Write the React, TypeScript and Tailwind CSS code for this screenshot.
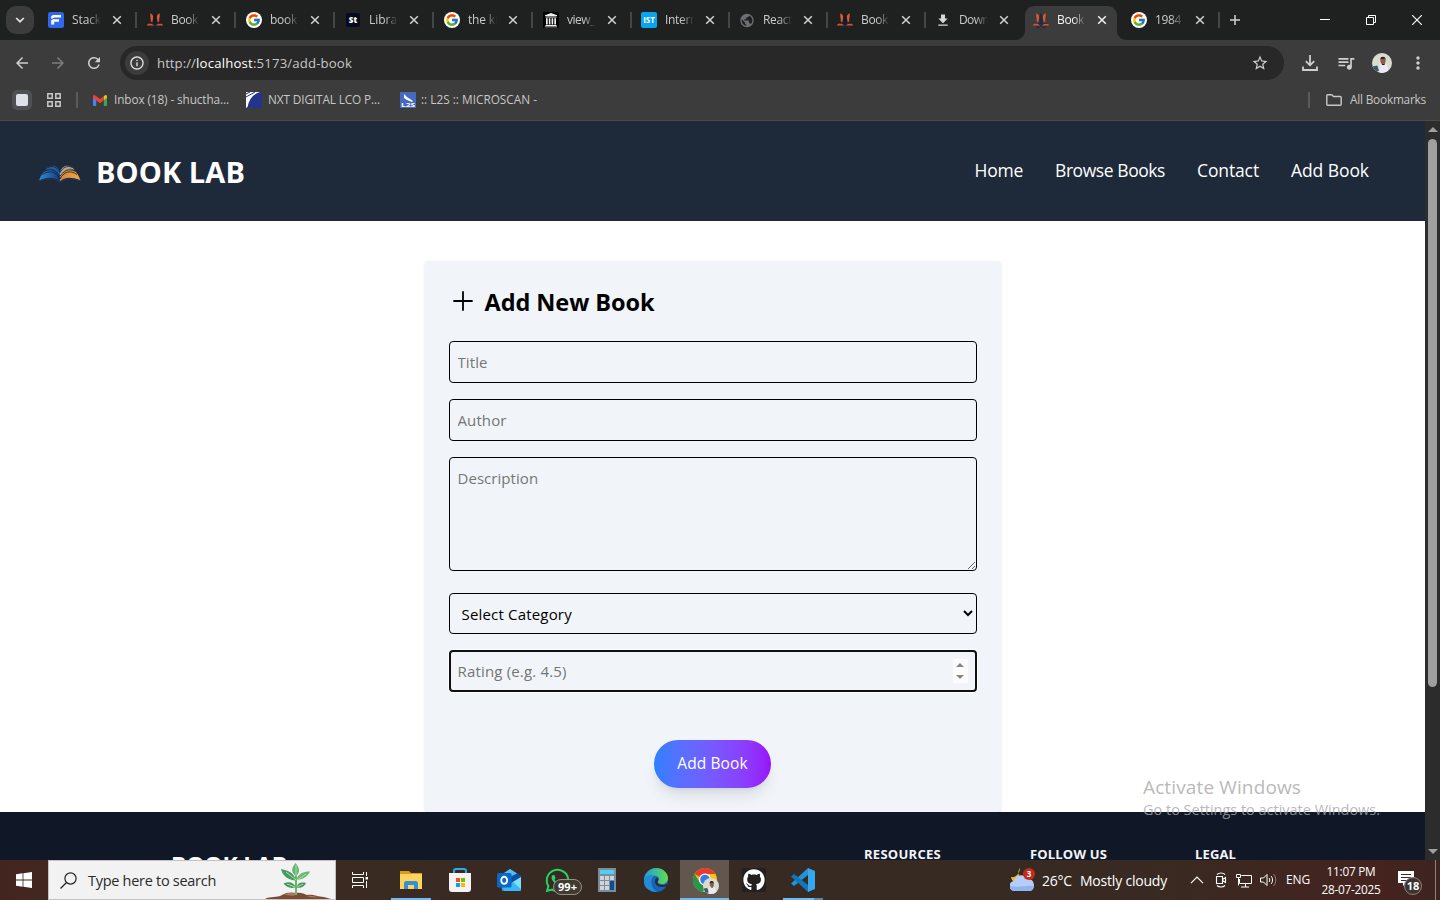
import { useLayoutEffect, useRef, type ReactNode } from "react";
import { FcGoogle } from "react-icons/fc";
import { FaGithub, FaWhatsapp } from "react-icons/fa";
import { MdArrowBack, MdArrowForward, MdRefresh, MdPublic, MdQueueMusic, MdStarBorder, MdMoreVert, MdInfoOutline, MdDownload } from "react-icons/md";

/** Single line of text whose letter spacing is tuned to fill a given width. */
function Fit({ w, className = "", children }: { w: number; className?: string; children: string }) {
  const ref = useRef<HTMLSpanElement>(null);
  useLayoutEffect(() => {
    const el = ref.current;
    if (!el) return;
    el.style.letterSpacing = "0px";
    const natural = el.getBoundingClientRect().width;
    el.style.letterSpacing = `${(w - natural) / children.length}px`;
  }, [w, children]);
  return (
    <span ref={ref} className={`inline-block shrink-0 whitespace-nowrap ${className}`}>
      {children}
    </span>
  );
}

function BookFavicon({ active = false }: { active?: boolean }) {
  return (
    <svg viewBox="0 0 16 16" className="size-4">
      <path d="M6.300 5 8 .5 9.700 5v7H6.300z" fill={active ? "#1d2b45" : "#141b27"} />
      <path d="M3.500 1.200C5.800 2.300 6.600 4.200 6 6.500l-.7 4L3.600 9C4.400 6.800 2.600 4.800 3.500 1.200zM12.500 1.200C10.200 2.300 9.400 4.200 10 6.500l.7 4L12.400 9c-.8-2.200 1-4.200.1-7.800z" fill="#e2572f" />
      <path d="M0 13.800c.3-2 1.700-2.700 3.400-2.300 1.500.4 2.700.8 3.800 2.200-2.300-.4-4.700-.4-7.200.1zM16 13.800c-.3-2-1.700-2.700-3.400-2.300-1.500.4-2.700.8-3.800 2.200 2.300-.4 4.700-.4 7.200.1z" fill="#dc522c" />
      <path d="M1 11h5l2 2 2-2h5l-1 .7H10.500L8 14.700 5.500 11.700z" fill="#1c2a44" />
      <path d="M3 15.200h4M9 15.200h4" stroke="#1c2a44" strokeWidth="1" />
    </svg>
  );
}

function GoogleFavicon() {
  return (
    <span className="flex size-4 items-center justify-center rounded-full bg-white">
      <FcGoogle className="size-[14px]" />
    </span>
  );
}

function StackFavicon() {
  return (
    <svg viewBox="0 0 16 16" className="size-4">
      <rect width="16" height="16" rx="2.500" fill="#2f68ee" />
      <path d="M3.200 4.200 5 3h8v2.500H6.500L3.200 7zM3.200 8.500 5 7.300h6v2.500H6.200v2.700h-3z" fill="#fff" />
    </svg>
  );
}

function ArchiveFavicon() {
  return (
    <svg viewBox="0 0 16 16" className="size-4">
      <path d="M0 0h16v16H0z" fill="#000" />
      <path d="M8 1l6 2.200v.8H2v-.8zM2.500 4.600h11v1h-11zM3 6.200h1.700v6.300H3zm2.800 0h1.600v6.300H5.800zm2.800 0h1.600v6.300H8.600zm2.700 0H13v6.300h-1.700zM2.500 13h11v1h-11zM1.800 14.400h12.400v.8H1.800z" fill="#eee" />
    </svg>
  );
}

function CloseGlyph({ active = false }: { active?: boolean }) {
  return (
    <svg viewBox="0 0 10 10" className="size-[10px]">
      <path d="M1.200 1.200l7.600 7.600M8.800 1.200 1.200 8.800" stroke={active ? "#f2f2f2" : "#d0d2d1"} strokeWidth="1.500" />
    </svg>
  );
}

const tabs: { label: string; w: number; icon: ReactNode; active?: boolean }[] = [
  { label: "Stack", w: 29, icon: <StackFavicon /> },
  { label: "Book", w: 27, icon: <BookFavicon /> },
  { label: "book", w: 27, icon: <GoogleFavicon /> },
  { label: "Librar", w: 33, icon: <span className="flex size-[14px] items-center justify-center rounded-xs bg-[#050c1d] text-[8px] font-extrabold text-white">St</span> },
  { label: "the kin", w: 37, icon: <GoogleFavicon /> },
  { label: "view_", w: 28, icon: <ArchiveFavicon /> },
  { label: "Intern", w: 32, icon: <span className="flex size-4 items-center justify-center rounded-xs bg-[#08a5ee] text-[8px] font-bold text-white">IST</span> },
  { label: "React", w: 29, icon: <MdPublic className="size-[17px] text-[#6c6f73]" /> },
  { label: "Book", w: 27, icon: <BookFavicon /> },
  { label: "Down", w: 30, icon: <MdDownload className="size-[17px] text-[#d8d8d8]" /> },
  { label: "Book", w: 27, icon: <BookFavicon active />, active: true },
  { label: "1984", w: 26, icon: <GoogleFavicon /> },
];

function TabStrip() {
  return (
    <div className="flex h-10 items-center bg-[#1f2120] text-[12px] text-[#c9cbca]">
      <div className="ml-[6px] flex h-7 w-7 shrink-0 items-center justify-center rounded-[10px] bg-[#3c3c3c]">
        <svg viewBox="0 0 10 6" className="h-[6px] w-[10px]"><path d="M1.200 1 5 4.700 8.800 1" fill="none" stroke="#e3e3e3" strokeWidth="1.700" /></svg>
      </div>
      <div className="ml-[4px] flex h-full">
        {tabs.map((t, i) => (
          <div key={i} className={`relative flex h-full shrink-0 items-center ${i < 5 ? "w-[99px]" : "w-[98px]"}`}>
            {t.active && (
              <svg viewBox="0 0 112 34" className="absolute top-[6px] left-[-8px] h-[34px] w-[112px]">
                <path d="M0 34c6 0 10-4 10-10V10C10 4 14 0 20 0h72c6 0 10 4 10 10v14c0 6 4 10 10 10z" fill="#3c3c3c" />
              </svg>
            )}
            <div className="relative ml-[10px] flex w-4 shrink-0 justify-center">{t.icon}</div>
            <div className={`relative ml-[8px] w-[29px] shrink-0 overflow-hidden [mask-image:linear-gradient(90deg,#000_55%,transparent)] ${t.active ? "text-[#f5f5f5]" : ""}`}>
              <Fit w={t.w}>{t.label}</Fit>
            </div>
            <div className="relative ml-[11px] flex w-[10px] shrink-0"><CloseGlyph active={t.active} /></div>
            {i !== 9 && i !== 10 && <div className="ml-[13px] h-4 w-[1.500px] shrink-0 bg-[#454746]" />}
          </div>
        ))}
      </div>
      <svg viewBox="0 0 12 12" className="ml-[10px] size-[12px]"><path d="M6 1v10M1 6h10" stroke="#d2d2d2" strokeWidth="1.500" /></svg>
      <div className="ml-auto flex items-center">
        <svg viewBox="0 0 10 10" className="mr-[36px] size-[10px]"><path d="M0 4.500h10" stroke="#fff" /></svg>
        <svg viewBox="0 0 10 10" className="mr-[36px] size-[10px]"><path d="M.5 2.500h7v7h-7zM2.500 2.500v-2h7v7h-2" fill="none" stroke="#fff" /></svg>
        <svg viewBox="0 0 10 10" className="mr-[18px] size-[10px]"><path d="M0 0l10 10M10 0 0 10" stroke="#fff" strokeWidth="1.100" /></svg>
      </div>
    </div>
  );
}

function Avatar({ className }: { className: string }) {
  return (
    <svg viewBox="0 0 20 20" className={className}>
      <defs><clipPath id="face"><circle cx="10" cy="10" r="10" /></clipPath></defs>
      <g clipPath="url(#face)">
        <path d="M0 0h20v20H0z" fill="#d9dccf" />
        <path d="M0 13h6v7H0z" fill="#6f9db2" />
        <path d="M1 13.500l4-1 2 5-4 2z" fill="#3f5568" />
        <path d="M8 11c3-2 6-1 7 1l2 8H7z" fill="#eaeaf5" />
        <ellipse cx="11" cy="7.500" rx="2.600" ry="3.400" fill="#8c5c43" />
        <path d="M8.300 6.500C8.300 2.500 14 3 13.700 7l-.7-1.500c-2 .5-3 0-4.700 1zM9.500 10c1 1.500 2.500 1.500 3.800-.5l-.8 2.500h-2.500z" fill="#261e1d" />
      </g>
    </svg>
  );
}

function Toolbar() {
  return (
    <div className="flex h-[46px] shrink-0 items-center bg-[#3c3c3c] text-[#cfcfcf]">
      <MdArrowBack className="ml-[13px] size-[18px]" />
      <MdArrowForward className="ml-[18px] size-[18px] text-[#7d7d7d]" />
      <MdRefresh className="ml-[18px] size-[18px]" />
      <div className="ml-[17px] flex h-[34px] w-[1164px] items-center rounded-full bg-[#282828] pl-[5px]">
        <span className="flex size-6 items-center justify-center rounded-full bg-[#3c3c3c]"><MdInfoOutline className="size-[16px] text-[#e3e3e3]" /></span>
        <span className="mt-[2px] ml-[8px] flex text-[13.200px] text-[#c7c7c7]">
          <Fit w={39}>http://</Fit>
          <Fit w={57} className="text-white">localhost</Fit>
          <Fit w={99}>:5173/add-book</Fit>
        </span>
        <MdStarBorder className="mr-[15px] ml-auto size-[18px]" />
      </div>
      <svg viewBox="0 0 16 16" className="ml-[18px] size-4"><path d="M8 0v10M3.800 6.200 8 10.300l4.200-4.100M1 11.500v3.500h14v-3.500" fill="none" stroke="#cfcfcf" strokeWidth="1.800" /></svg>
      <MdQueueMusic className="ml-[18px] size-[20px]" />
      <Avatar className="ml-[16px] size-5" />
      <MdMoreVert className="ml-[16px] size-5" />
    </div>
  );
}

function Bookmarks() {
  return (
    <div className="flex h-[34px] shrink-0 items-center bg-[#3c3c3c] pb-[6px] text-[11.800px] text-[#c7c7c7]">
      <span className="ml-[12px] flex size-5 items-center justify-center rounded-[5px] bg-[#4e5054]"><span className="size-3 rounded-[2px] bg-[#dfe1e8]" /></span>
      <svg viewBox="0 0 14 14" className="ml-[15px] size-[14px]"><path d="M.8.8h4.400v4.400H.8zM8.800.8h4.400v4.400H8.800zM.8 8.800h4.400v4.400H.8zM8.800 8.800h4.400v4.400H8.800z" fill="none" stroke="#c9c9c9" strokeWidth="1.500" /></svg>
      <span className="ml-[15px] h-4 w-[2px] bg-[#5b5b5b]" />
      <svg viewBox="0 0 14 11" className="ml-[15px] h-[11px] w-[14px]">
        <path d="M0 1.500h3.200V11H1a1 1 0 0 1-1-1z" fill="#4285f4" />
        <path d="M10.800 1.500H14V10a1 1 0 0 1-1 1h-2.200z" fill="#34a853" />
        <path d="M10.800 1.200 12 .3c.8-.6 2 0 2 1.200v1.300l-3.200 2.500z" fill="#fbbc04" />
        <path d="M0 1.500C0 .3 1.200-.3 2 .3l5 3.800 3.800-2.900v4.100L7 8.200 0 2.900z" fill="#ea4335" />
      </svg>
      <Fit w={115} className="ml-[7px]">Inbox (18) - shuctha...</Fit>
      <svg viewBox="0 0 16 16" className="ml-[17px] size-4"><path d="M0 0h16v16H0z" fill="#22358b" /><path d="M0 0h14C7 2 3 7 1.500 15L0 16z" fill="#fff" /><path d="M0 5 9 0M0 2 4 0" stroke="#22358b" strokeWidth="1" /></svg>
      <Fit w={112} className="ml-[6px]">NXT DIGITAL LCO P...</Fit>
      <svg viewBox="0 0 16 16" className="ml-[20px] size-4"><path d="M0 0h16v16H0z" fill="#466abf" /><path d="M4 2l3 3 6 4-1 1-5-2-3-2z" fill="#fff" /><text x="1" y="15" fontSize="5" fontWeight="bold" fill="#fff" textLength="14" lengthAdjust="spacingAndGlyphs">L2S</text></svg>
      <Fit w={116} className="ml-[5px]">:: L2S :: MICROSCAN -</Fit>
      <span className="ml-auto h-4 w-[2px] bg-[#5b5b5b]" />
      <svg viewBox="0 0 16 12" className="ml-[16px] h-3 w-4"><path d="M.8 10.200V1.800c0-.6.4-1 1-1h4L7.500 2.500h6.700c.6 0 1 .4 1 1v6.700c0 .6-.4 1-1 1H1.800c-.6 0-1-.4-1-1z" fill="none" stroke="#c7c7c7" strokeWidth="1.400" /></svg>
      <Fit w={76} className="mr-[14px] ml-[8px]">All Bookmarks</Fit>
    </div>
  );
}

function BookLogo() {
  return (
    <svg viewBox="0 0 44 20" className="h-5 w-[44px]">
      <defs>
        <linearGradient id="lp"><stop offset="0" stopColor="#2e8bcb" /><stop offset=".65" stopColor="#1c58a9" /><stop offset="1" stopColor="#172f62" /></linearGradient>
        <linearGradient id="rp"><stop offset="0" stopColor="#d88239" /><stop offset="1" stopColor="#f5aa3b" /></linearGradient>
      </defs>
      <path d="M1 17.500C4 9 8 6 13 6c4 0 8 3 9 8v4.500C16.500 13.500 9 14 1 17.500z" fill="url(#lp)" />
      <path d="M42.500 17.500C39.500 9 36 6 31 6c-4 0-8 3-9 8v4.500C27 13.500 34 14 42.500 17.500z" fill="url(#rp)" />
      <path d="M7.500 7c3-5.500 11.500-6.500 14.500 2v5C19 6 14 4 7.500 7z" fill="#1b60ae" />
      <path d="M36.500 7c-3-5.500-11.500-6.500-14.500 2v5C26 6 31 4 36.500 7z" fill="#afa7a6" />
      <path d="M4.500 11.500c7-5 14-2.500 17.500 4.500M6.500 8.500c7-4 12 0 15.500 4.500M10 4.500c6-3 9.500 1 12 5M39 11.500c-7-5-13.500-2.500-17 4.500M37.500 8.500c-7-4-12 0-15.500 4.500M34.500 4.500c-6-3-10 1-12.500 5" fill="none" stroke="#1e2939" strokeWidth=".9" />
      <path d="M0 18.500c8-3.500 16.500-3.500 22 .8 5.500-4.300 13-4.300 21.500-1.300" fill="none" stroke="#193861" strokeWidth="1.200" />
    </svg>
  );
}

function SiteHeader() {
  return (
    <header className="flex h-[100px] shrink-0 items-center bg-gray-800 pr-[56px] pl-[38px] text-white">
      <div className="mt-1"><BookLogo /></div>
      <Fit w={149} className="mt-[2px] ml-[14px] text-[29px] leading-[40px] font-bold">BOOK LAB</Fit>
      <nav className="mb-[2px] ml-auto flex gap-8 text-[17.500px] leading-7">
        <Fit w={48.500}>Home</Fit>
        <Fit w={110}>Browse Books</Fit>
        <Fit w={62}>Contact</Fit>
        <Fit w={78}>Add Book</Fit>
      </nav>
    </header>
  );
}

const field = "block w-full rounded-sm border border-black bg-transparent p-2 text-[15px] leading-6 outline-none placeholder:text-[#757575]";

function AddBookForm() {
  return (
    <form className="mx-auto mt-10 h-[551px] w-full max-w-xl shrink-0 rounded-sm bg-slate-100 p-6 shadow-sm">
      <h2 className="flex h-8 items-center text-black">
        <svg viewBox="0 0 20 20" className="mb-[1px] ml-[4px] size-5"><path d="M10 1v18M1 10h18" stroke="#000" strokeWidth="1.800" strokeLinecap="round" /></svg>
        <Fit w={170} className="mt-[2px] ml-[12px] text-[23.500px] leading-8 font-bold">Add New Book</Fit>
      </h2>
      <input placeholder="Title" className={`${field} mt-6 h-[42px] tracking-[0.1px]`} />
      <input placeholder="Author" className={`${field} mt-4 h-[42px] tracking-[0.1px]`} />
      <textarea placeholder="Description" className={`${field} mt-4 h-[114px] resize-y tracking-[0.05px]`} />
      <select className={`${field} mt-[22px] h-[41px] tracking-[0.18px] text-black`}>
        <option>Select Category</option>
      </select>
      <div className="mt-4 flex h-[42px] items-center rounded-sm border-2 border-[#101010] pr-[7px] pl-[7px] ring-1 ring-white">
        <input placeholder="Rating (e.g. 4.5)" className="min-w-0 flex-1 bg-transparent text-[15px] leading-6 tracking-[0.17px] outline-none placeholder:text-[#757575]" />
        <div className="flex h-6 w-[15px] flex-col items-center justify-between bg-[#fcfcfc] py-[4px]">
          <svg viewBox="0 0 8 4" className="h-1 w-2"><path d="M0 4 4 0l4 4z" fill="#858585" /></svg>
          <svg viewBox="0 0 8 4" className="h-1 w-2"><path d="M0 0l4 4 4-4z" fill="#858585" /></svg>
        </div>
      </div>
      <div className="mt-12 flex justify-center">
        <button type="button" className="flex h-12 w-[117px] items-center justify-center rounded-full bg-linear-to-r from-blue-500 to-purple-600 text-[15.500px] font-medium text-white shadow-lg">
          <Fit w={70.500}>Add Book</Fit>
        </button>
      </div>
    </form>
  );
}

function SiteFooter() {
  return (
    <footer className="flex h-12 shrink-0 overflow-hidden bg-gray-900 text-[13px] font-bold text-[#f3f4f6]">
      <Fit w={116} className="mt-[37px] ml-[171px] text-[23px] leading-8 text-white">BOOK LAB</Fit>
      <Fit w={77} className="mt-[32px] ml-[577px] leading-5">RESOURCES</Fit>
      <Fit w={77} className="mt-[32px] ml-[89px] leading-5">FOLLOW US</Fit>
      <Fit w={41} className="mt-[32px] ml-[88px] leading-5">LEGAL</Fit>
    </footer>
  );
}

function Scrollbar() {
  return (
    <div className="flex w-[15px] shrink-0 flex-col items-center bg-[#2c2c2c] py-[6px]">
      <svg viewBox="0 0 10 5" className="h-[5px] w-[10px]"><path d="M0 5 5 0l5 5z" fill="#9f9f9f" /></svg>
      <div className="mt-[7px] h-[548px] w-[9px] rounded-full bg-[#9f9f9f]" />
      <svg viewBox="0 0 10 5" className="mt-auto h-[5px] w-[10px]"><path d="M0 0l5 5 5-5z" fill="#9f9f9f" /></svg>
    </div>
  );
}

function Plant() {
  return (
    <svg viewBox="0 0 66 38" className="h-[38px] w-[66px]">
      <path d="M0 38c5-3 12-1 17-4 4-3 10-3 14-2 5-1 8 1 11 2 7-1 10 2 17 2l7 2z" fill="#7a4c38" />
      <path d="M19 34c5-3 9-2 13-1-3 3-8 1-13 1zM42 35c5-1 8 1 12 1-5 1-9 0-12-1z" fill="#ac7d62" />
      <path d="M31 34V11" stroke="#6db868" strokeWidth="2" />
      <path d="M31 15c-6-4-4-8.500-.5-13 4 4.500 5 9.500.5 13z" fill="#5fb571" />
      <path d="M31 19.500C23 19 17.500 15 16 8c8 1.500 13.500 4.500 15 11.500z" fill="#479a61" />
      <path d="M31 19c2-6 7-8.500 14-8.500C43 15.500 37.500 18.500 31 19z" fill="#68b873" />
      <path d="M31 26c-3-5-7-6-12.500-3.500 3 4 8 5.500 12.500 3.500zM31.500 26.500c1.500-5 5-5.500 9.500-4.500-1.500 4-5.500 5.500-9.500 4.500z" fill="#439660" />
      <path d="M31 15V4M31 19l-10-8M32 19l9-6M30 26l-8-3M32 26l6-3" stroke="#b1dfa9" strokeWidth="1" />
    </svg>
  );
}

function Slot({ children, className = "" }: { children: ReactNode; className?: string }) {
  return <div className={`relative flex h-10 w-[49px] shrink-0 items-center justify-center ${className}`}>{children}</div>;
}

function PinnedApps() {
  return (
    <div className="ml-px flex">
      <Slot>
        <svg viewBox="0 0 22 18" className="h-[18px] w-[22px]"><path d="M0 0h9l2 2h11v16H0z" fill="#d99a17" /><path d="M0 3h22v15H0z" fill="#ffd35c" /><path d="M4 18v-6c0-1 1-2 2-2h10c1 0 2 1 2 2v6h-4v-4H8v4z" fill="#3690d5" /></svg>
        <span className="absolute bottom-0 h-[2px] w-10 bg-[#76b9ed]" />
      </Slot>
      <Slot>
        <svg viewBox="0 0 24 24" className="size-6"><path d="M6 7V3c0-1 1-2 2-2h8c1 0 2 1 2 2v4" fill="none" stroke="#28afe9" strokeWidth="2" /><path d="M1 5h22v16a3 3 0 0 1-3 3H4a3 3 0 0 1-3-3z" fill="#f3f3f3" /><path d="M8 10h4v4H8z" fill="#f25022" /><path d="M13 10h4v4h-4z" fill="#7fba00" /><path d="M8 15h4v4H8z" fill="#00a4ef" /><path d="M13 15h4v4h-4z" fill="#ffb900" /></svg>
      </Slot>
      <Slot>
        <svg viewBox="0 0 24 24" className="size-6"><path d="M3 8 13 1l11 7v14l-1 1H5z" fill="#1b83dc" /><path d="M7 5l6-4 7 4.500-7 3z" fill="#55bdf2" /><path d="M14 13l10-5v13l-1 2z" fill="#7fe0fb" /><path d="M5 20l10-7 9 8c0 1.500-.8 2-2 2H7z" fill="#39b9f4" /><path d="M14 9l6-3.500L24 8v1l-10 6z" fill="#0d4f9e" /><rect y="5" width="14.500" height="14.500" rx="1.500" fill="#0868c9" /><ellipse cx="7.200" cy="12.300" rx="3" ry="3.500" fill="none" stroke="#fff" strokeWidth="1.900" /></svg>
      </Slot>
      <Slot>
        <FaWhatsapp className="size-[27px] text-[#25d366]" />
        <span className="absolute top-[19px] left-[20px] flex h-4 w-[29px] items-center justify-center rounded-full border border-[#969089] bg-[#403b32] text-[11px] font-bold text-white">99+</span>
      </Slot>
      <Slot>
        <svg viewBox="0 0 18 24" className="h-6 w-[18px]"><path d="M0 0h18v24H0z" fill="#7e8b99" /><path d="M2 2h14v4H2z" fill="#4fd1f5" /><path d="M2 8h4v4H2zm5 0h4v4H7zm5 0h4v4h-4zM2 13h4v4H2zm5 0h4v4H7zM2 18h4v4H2zm5 0h4v4H7z" fill="#ccd4dc" /><path d="M12 13h4v9h-4z" fill="#0b4e94" /></svg>
      </Slot>
      <Slot>
        <svg viewBox="0 0 24 24" className="size-6"><defs><linearGradient id="eg"><stop offset="0" stopColor="#219bdc" /><stop offset="1" stopColor="#60dc4f" /></linearGradient></defs><circle cx="12" cy="12" r="12" fill="#1267bd" /><path d="M0 12C0 5 6 0 12 0c7 0 12 5 12 10 0 4-3 6-6 6-2 0-5-1-4-3 3-3-1-6-5-5-5 0-7 3-9 6z" fill="url(#eg)" /><path d="M0 12c2-5 7-6 10-4-4 3-4 11 3 16C5 24-1 19 0 12z" fill="#258bd7" /><path d="M14 13c-2 2 1 4 4 4 2 0 3 0 5-1 1 0 1 1 0 2-5 2-12 1-12-5 0-2 1-3 2-3 1 1 2 1 1 3z" fill="#352820" /></svg>
      </Slot>
      <Slot className="bg-[#62564e]">
        <svg viewBox="0 0 24 24" className="size-6"><circle cx="12" cy="12" r="12" fill="#fbc116" /><path d="M12 12 1.600 6A12 12 0 0 1 22.400 6H12z" fill="#e53b31" /><path d="M1.600 6 8 16l4 2-2 6A12 12 0 0 1 1.600 6z" fill="#26964b" /><circle cx="12" cy="11.500" r="6" fill="#fff" /><circle cx="12" cy="11.500" r="4.800" fill="#3478ea" /></svg>
        <Avatar className="absolute top-[18px] left-[23px] size-4" />
        <span className="absolute bottom-0 h-[2px] w-full bg-[#76b9ed]" />
      </Slot>
      <Slot><span className="flex size-6 items-center justify-center bg-[#241f21]"><FaGithub className="size-[22px] text-white" /></span></Slot>
      <Slot>
        <svg viewBox="0 0 24 24" className="size-6"><path d="M17 0v7L3 18l-3-2.500z" fill="#2193d6" /><path d="M0 8.500 3 6l14 11v7z" fill="#1376ba" /><path d="M17 0l7 3v18l-7 3z" fill="#35a9ed" /></svg>
        <span className="absolute bottom-0 left-[5px] h-[2px] w-[31px] bg-[#76b9ed]" />
        <span className="absolute bottom-0 left-[36px] h-[2px] w-[9px] bg-[#5c89aa]" />
      </Slot>
    </div>
  );
}

function Tray() {
  return (
    <div className="ml-auto flex items-center text-white">
      <div className="relative h-6 w-[25px]">
        <svg viewBox="0 0 25 24" className="h-6 w-[25px]"><path d="M10 0C6 5 10 12 17 11 12 17 2 16 1 9c5 1 9-4 9-9z" fill="#f7b736" /><path d="M5 23a5 5 0 0 1-1-10 7 7 0 0 1 13-2 6 6 0 0 1 7 6c0 4-2 6-5 6z" fill="#b6cdf7" /><path d="M0 18c8 2 16-1 24 0-1 4-3 5-5 5H5c-3 0-5-2-5-5z" fill="#8fb4f2" /></svg>
        <span className="absolute top-0 left-[13px] flex size-[12px] items-center justify-center rounded-full bg-[#c42b1c] text-[8px] font-bold">3</span>
      </div>
      <Fit w={30} className="ml-[7px] text-[14px]">26°C</Fit>
      <Fit w={87} className="ml-[8px] text-[14px]">Mostly cloudy</Fit>
      <svg viewBox="0 0 14 8" className="ml-[23px] h-2 w-[14px]"><path d="M1 7.200 7 1.200l6 6" fill="none" stroke="#fff" strokeWidth="1.200" /></svg>
      <svg viewBox="0 0 12 16" className="ml-[11px] h-4 w-3"><path d="M1.500 4.500h6v7h-6zM7.500 7.500l3-2v5l-3-2M2 2.500c2-2 6-2 8 0M2 13.500c2 2 6 2 8 0" fill="none" stroke="#fff" strokeWidth="1.100" /></svg>
      <svg viewBox="0 0 16 15" className="ml-[9px] h-[15px] w-4"><path d="M5.500 2.500h10v8h-12V6M9.500 11v3M5 14h8M.5 1.500h4v3h-4zM2.500 4.500v8" fill="none" stroke="#fff" /></svg>
      <svg viewBox="0 0 17 14" className="ml-[8px] h-[14px] w-[17px]"><path d="M.5 5h3l3.500-3.500v11L3.500 9h-3zM9 5c1 1 1 3 0 4M11 3c2 2 2 6 0 8" fill="none" stroke="#fff" /><path d="M13.500 1c3 3 3 9 0 12" fill="none" stroke="#8f8580" /></svg>
      <Fit w={24} className="ml-[9px] text-[12px]">ENG</Fit>
      <div className="ml-[11px] flex w-[60px] flex-col items-center text-[11.800px] leading-[18px]">
        <Fit w={49}>11:07 PM</Fit>
        <Fit w={59}>28-07-2025</Fit>
      </div>
      <div className="relative ml-[17px] h-6 w-[26px]">
        <svg viewBox="0 0 16 16" className="mt-[3px] size-4"><path d="M0 0h16v12H8l-3 3v-3H0z" fill="#fff" /><path d="M3 3.500h10M3 6.500h10M3 9.500h7" stroke="#3d2923" /></svg>
        <span className="absolute top-[9px] left-[6px] flex size-[18px] items-center justify-center rounded-full border border-[#8b8480] bg-[#3b3430] text-[11px] font-bold">18</span>
      </div>
      <span className="mr-[4px] ml-[11px] h-10 w-px bg-[#8f8380]" />
    </div>
  );
}

function Taskbar() {
  return (
    <div className="flex h-10 shrink-0 items-center bg-[linear-gradient(90deg,#43251f_0%,#3a2a22_23%,#352a22_45%,#382a22_80%,#45231f_96%,#3c2421_100%)]">
      <svg viewBox="0 0 16 16" className="ml-4 size-4 shrink-0"><path d="M0 2.200 6.600 1.300v6.300H0zM7.400 1.200 16 0v7.600H7.400zM0 8.400h6.600v6.300L0 13.800zM7.400 8.400H16V16l-8.600-1.200z" fill="#fff" /></svg>
      <div className="ml-4 flex h-10 w-72 shrink-0 items-center overflow-hidden border border-[#c5c1bf] bg-[#f2f2f2] text-[#2a2a2a]">
        <svg viewBox="0 0 17 17" className="ml-[11px] size-[17px]"><circle cx="10.500" cy="6.500" r="5.600" fill="none" stroke="#222" strokeWidth="1.200" /><path d="M6.500 10.500.5 16.500" stroke="#222" strokeWidth="1.300" /></svg>
        <Fit w={128} className="mt-[2px] ml-[11px] text-[14.500px]">Type here to search</Fit>
        <div className="mr-[4px] ml-auto"><Plant /></div>
      </div>
      <Slot><svg viewBox="0 0 17 16" className="h-4 w-[17px]"><path d="M.5 0v2.500h11V0M.5 16v-2.500h11V16M.5 5.500h11v5H.5zM14.500 0v4M14.500 9v7" fill="none" stroke="#fff" /><path d="M13.500 5h2.500v2.500h-2.500z" fill="#fff" /></svg></Slot>
      <PinnedApps />
      <Tray />
    </div>
  );
}

export default function App() {
  return (
    <div className="relative flex h-[900px] w-[1440px] flex-col overflow-hidden bg-white font-['Open_Sans','Noto_Sans',sans-serif]">
      <TabStrip />
      <Toolbar />
      <Bookmarks />
      <div className="h-px shrink-0 bg-[#4b4b4b]" />
      <div className="flex h-[739px] shrink-0">
        <main className="flex w-[1425px] flex-col">
          <SiteHeader />
          <AddBookForm />
          <SiteFooter />
        </main>
        <Scrollbar />
      </div>
      <Taskbar />
      <div className="pointer-events-none absolute top-[774px] left-[1143px] flex flex-col items-start text-[#a6a6a6]/80">
        <Fit w={158} className="text-[19px] leading-[26px]">Activate Windows</Fit>
        <Fit w={237} className="text-[14.500px] leading-[20px]">Go to Settings to activate Windows.</Fit>
      </div>
    </div>
  );
}
